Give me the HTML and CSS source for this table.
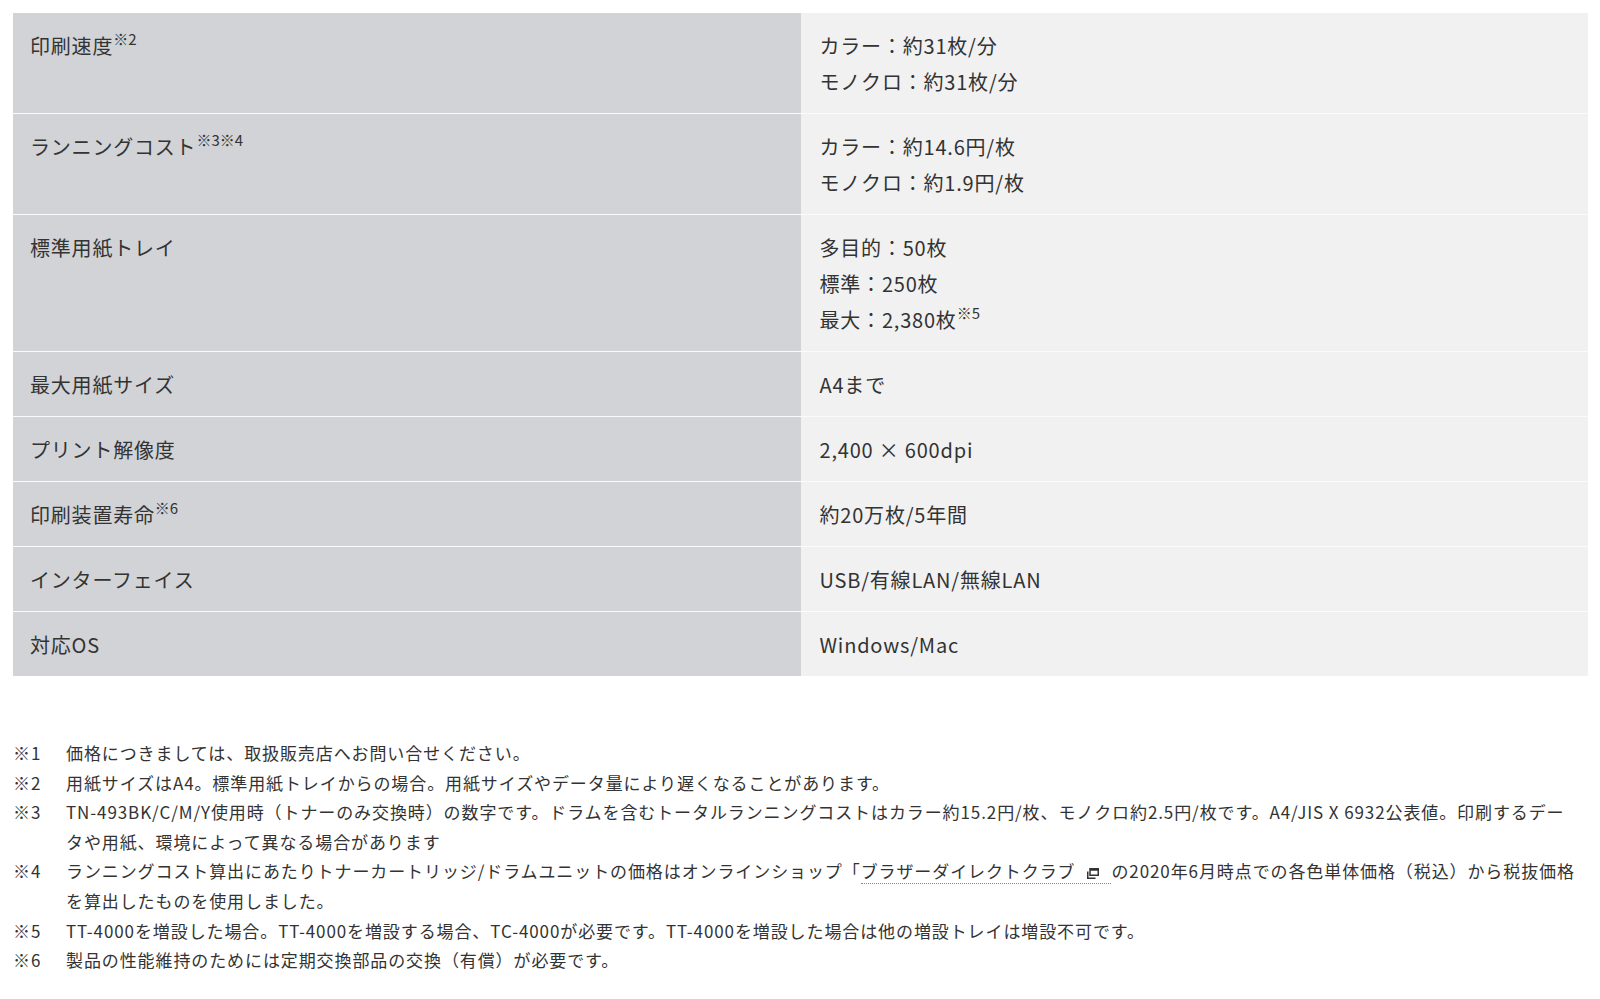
FILE: index.html
```html
<!DOCTYPE html>
<html lang="ja">
<head>
<meta charset="utf-8">
<title>仕様</title>
<link rel="stylesheet" href="styles.css">
</head>
<body>
<div class="page">
  <table class="spec">
    <tr><th>印刷速度<sup>※2</sup></th><td>カラー：約31枚/分<br>モノクロ：約31枚/分</td></tr>
    <tr><th>ランニングコスト<sup>※3※4</sup></th><td>カラー：約14.6円/枚<br>モノクロ：約1.9円/枚</td></tr>
    <tr><th>標準用紙トレイ</th><td>多目的：50枚<br>標準：250枚<br>最大：2,380枚<sup>※5</sup></td></tr>
    <tr><th>最大用紙サイズ</th><td>A4まで</td></tr>
    <tr><th>プリント解像度</th><td>2,400 × 600dpi</td></tr>
    <tr><th>印刷装置寿命<sup>※6</sup></th><td>約20万枚/5年間</td></tr>
    <tr><th>インターフェイス</th><td>USB/有線LAN/無線LAN</td></tr>
    <tr><th>対応OS</th><td>Windows/Mac</td></tr>
  </table>

  <ul class="notes">
    <li><span class="mark">※1</span><p>価格につきましては、取扱販売店へお問い合せください。</p></li>
    <li><span class="mark">※2</span><p>用紙サイズはA4。標準用紙トレイからの場合。用紙サイズやデータ量により遅くなることがあります。</p></li>
    <li><span class="mark">※3</span><p>TN-493BK/C/M/Y使用時（トナーのみ交換時）の数字です。ドラムを含むトータルランニングコストはカラー約15.2円/枚、モノクロ約2.5円/枚です。A4/JIS X 6932公表値。印刷するデータや用紙、環境によって異なる場合があります</p></li>
    <li><span class="mark">※4</span><p>ランニングコスト算出にあたりトナーカートリッジ/ドラムユニットの価格はオンラインショップ「<a class="ext" href="#">ブラザーダイレクトクラブ<svg class="ext-icon" width="12" height="11" viewBox="0 0 12 11" aria-hidden="true"><rect x="3" y="0.75" width="8.25" height="6.5" fill="none" stroke="#333" stroke-width="1.5"/><rect x="3" y="0.75" width="8.25" height="2" fill="#333"/><path d="M0.75 3.5 V10.25 H8.5" fill="none" stroke="#333" stroke-width="1.5"/></svg></a>の2020年6月時点での各色単体価格（税込）から税抜価格を算出したものを使用しました。</p></li>
    <li><span class="mark">※5</span><p>TT-4000を増設した場合。TT-4000を増設する場合、TC-4000が必要です。TT-4000を増設した場合は他の増設トレイは増設不可です。</p></li>
    <li><span class="mark">※6</span><p>製品の性能維持のためには定期交換部品の交換（有償）が必要です。</p></li>
  </ul>
</div>
</body>
</html>
```

FILE: styles.css
```css
html, body {
  margin: 0;
  padding: 0;
  background: #ffffff;
}

body {
  font-family: "Noto Sans CJK JP", "Noto Sans", sans-serif;
  color: #333333;
}

.page {
  padding: 13px 12px 20px 13px;
}

.spec {
  width: 100%;
  border-collapse: collapse;
  table-layout: fixed;
  font-size: 20px;
  line-height: 36px;
  letter-spacing: 0.04em;
}

.spec th,
.spec td {
  text-align: left;
  vertical-align: top;
  font-weight: 400;
  padding: 15px 19px 13px 19px;
  border-top: 1px solid #fbfbfb;
}

.spec th {
  padding-left: 17px;
}

.spec tr:first-child th,
.spec tr:first-child td {
  border-top: none;
}

.spec th {
  background: #d2d3d7;
}

.spec td {
  background: #f1f1f1;
}

.spec sup {
  font-size: 15px;
  line-height: 0;
  vertical-align: 9px;
  letter-spacing: 0;
}

.notes {
  list-style: none;
  margin: 62px 0 0 0;
  padding: 0;
  font-size: 17px;
  line-height: 29.6px;
  letter-spacing: 0.9px;
}

.notes li {
  display: flex;
}

.notes .mark {
  flex: 0 0 53px;
}

.notes p {
  margin: 0;
  padding-right: 10px;
  flex: 1 1 auto;
}

.ext {
  color: #333333;
  text-decoration: none;
  border-bottom: 1px dotted #888888;
  padding-right: 12px;
}

.ext-icon {
  display: inline-block;
  margin-left: 12px;
  vertical-align: -1px;
}
```
